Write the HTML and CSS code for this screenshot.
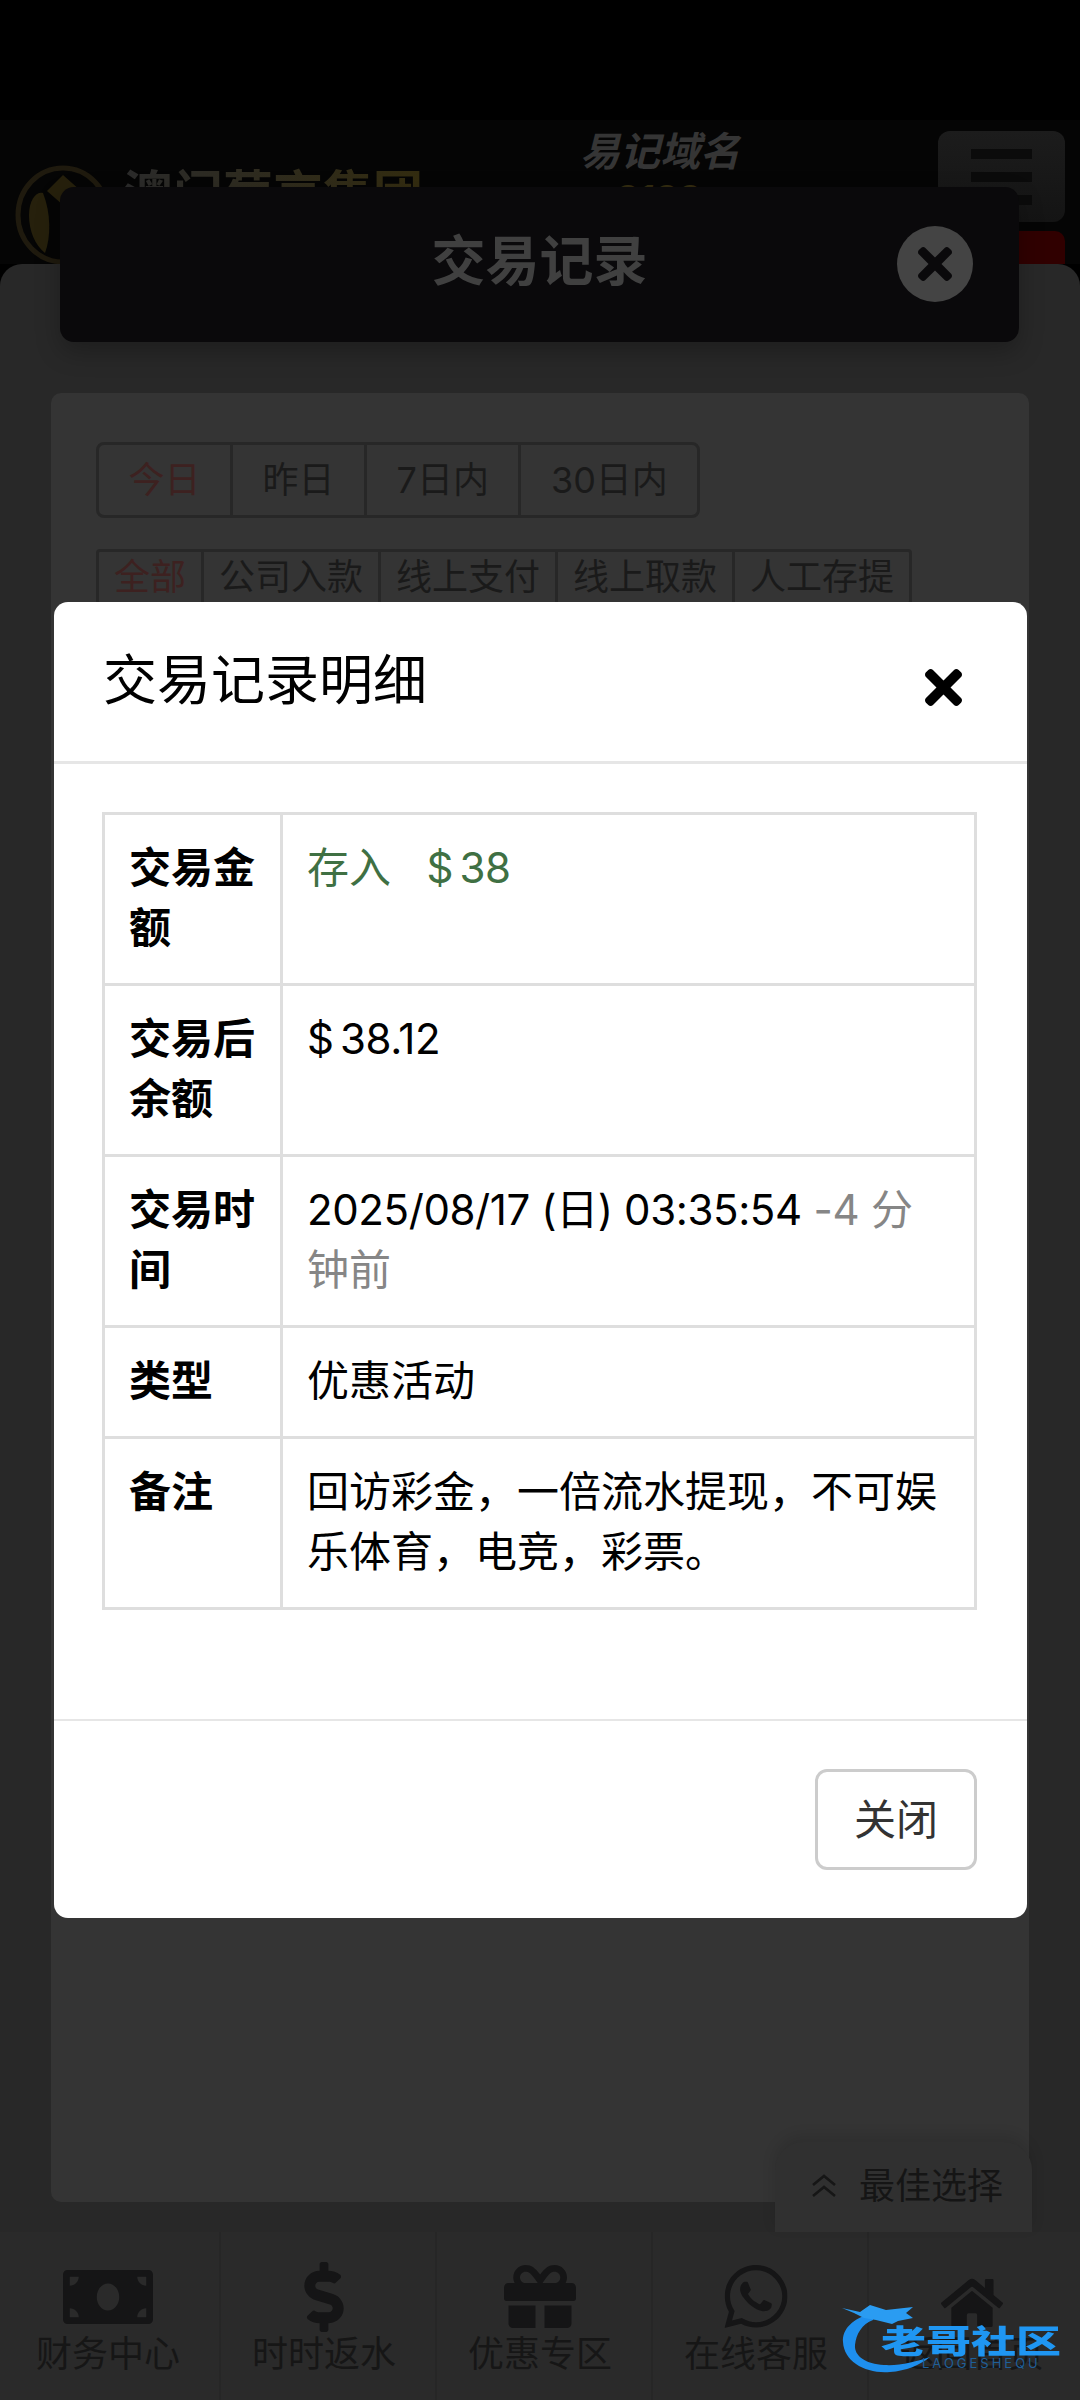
FILE: index.html
```html
<!DOCTYPE html>
<html lang="zh-CN">
<head>
<meta charset="utf-8">
<title>交易记录</title>
<link rel="stylesheet" href="styles.css">
</head>
<body>
<div class="page">
  <div class="status-bar"></div>

  <header class="site-header">
    <div class="brand">
      <svg class="brand-mark" viewBox="0 0 96 100" aria-hidden="true">
        <ellipse cx="48" cy="50" rx="45" ry="47" fill="none" stroke="#1f1a0e" stroke-width="5"/>
        <path d="M48 10 L66 26 L48 40 L32 26 Z" fill="#26200c"/>
        <path d="M14 50 C14 34 22 26 28 28 C36 48 36 72 30 88 C20 80 14 66 14 50 Z" fill="#26200c"/>
      </svg>
      <span class="brand-name">澳门葡京集团</span>
    </div>
    <div class="domain">
      <span class="domain-label">易记域名</span>
      <span class="domain-value">a.8188</span>
    </div>
    <div class="header-side">
      <button class="menu-button" type="button" aria-label="菜单"><i></i><i></i><i></i></button>
      <span class="notice-tag"></span>
    </div>
  </header>

  <main class="panel">
    <section class="records">
      <div class="range-tabs">
        <span class="tab is-active">今日</span>
        <span class="tab">昨日</span>
        <span class="tab">7日内</span>
        <span class="tab">30日内</span>
      </div>
      <div class="type-tabs">
        <span class="tab is-active">全部</span>
        <span class="tab">公司入款</span>
        <span class="tab">线上支付</span>
        <span class="tab">线上取款</span>
        <span class="tab">人工存提</span>
      </div>
    </section>
  </main>

  <nav class="bottom-nav">
    <a class="nav-item">
      <svg class="nav-icon" width="90" height="54" viewBox="0 64 640 384"><path d="M608 64H32C14.33 64 0 78.33 0 96v320c0 17.67 14.33 32 32 32h576c17.67 0 32-14.33 32-32V96c0-17.67-14.33-32-32-32zM48 400v-64c35.35 0 64 28.65 64 64H48zm0-224v-64h64c0 35.35-28.65 64-64 64zm272 176c-44.19 0-80-42.99-80-96 0-53.02 35.82-96 80-96s80 42.98 80 96c0 53.03-35.83 96-80 96zm272 48h-64c0-35.35 28.65-64 64-64v64zm0-224c-35.35 0-64-28.65-64-64h64v64z"/></svg>
      <span>财务中心</span>
    </a>
    <a class="nav-item">
      <svg class="nav-icon" width="40" height="70" viewBox="0 0 288 512"><path d="M209.2 233.4l-108-31.6C88.7 198.2 80 186.5 80 173.5c0-16.3 13.2-29.5 29.5-29.5h66.3c12.2 0 24.2 3.7 34.2 10.5 6.1 4.1 14.3 3.1 19.5-2l34.8-34c7.1-6.9 6.1-18.4-1.8-24.5C238 74.8 207.4 64.1 176 64V16c0-8.8-7.2-16-16-16h-32c-8.8 0-16 7.2-16 16v48h-2.5C45.8 64-5.4 118.7.5 183.6c4.2 46.1 39.4 83.6 83.8 96.6l102.5 30c12.5 3.7 21.2 15.3 21.2 28.3 0 16.3-13.2 29.5-29.5 29.5h-66.3C100 368 88 364.3 78 357.5c-6.1-4.1-14.3-3.1-19.5 2l-34.8 34c-7.1 6.9-6.1 18.4 1.8 24.5 24.5 19.2 55.1 29.9 86.5 30v48c0 8.8 7.2 16 16 16h32c8.8 0 16-7.2 16-16v-48.2c46.6-.9 90.3-28.6 105.7-72.7 21.5-61.6-14.6-124.8-72.5-141.7z"/></svg>
      <span>时时返水</span>
    </a>
    <a class="nav-item">
      <svg class="nav-icon" width="72" height="63" viewBox="0 32 512 448"><path d="M32 448c0 17.7 14.3 32 32 32h160V320H32v128zm256 32h160c17.7 0 32-14.3 32-32V320H288v160zm192-320h-42.1c6.2-12.1 10.1-25.5 10.1-40 0-48.5-39.5-88-88-88-41.6 0-68.5 21.3-103 68.3-34.5-47-61.4-68.3-103-68.3-48.5 0-88 39.5-88 88 0 14.5 3.8 27.9 10.1 40H32c-17.7 0-32 14.3-32 32v80c0 8.8 7.2 16 16 16h480c8.8 0 16-7.2 16-16v-80c0-17.7-14.3-32-32-32zm-326.1 0c-22.1 0-40-17.9-40-40s17.9-40 40-40c19.9 0 34.6 3.3 86.1 80h-86.1zm206.1 0h-86.1c51.4-76.5 65.7-80 86.1-80 22.1 0 40 17.9 40 40s-17.9 40-40 40z"/></svg>
      <span>优惠专区</span>
    </a>
    <a class="nav-item">
      <svg class="nav-icon" width="63" height="63" viewBox="0 32 448 448"><path d="M380.9 97.1C339 55.1 283.2 32 223.9 32c-122.4 0-222 99.6-222 222 0 39.1 10.2 77.3 29.6 111L0 480l117.7-30.9c32.4 17.7 68.9 27 106.1 27h.1c122.3 0 224.1-99.6 224.1-222 0-59.3-25.2-115-67.1-157zm-157 341.6c-33.2 0-65.7-8.9-94-25.7l-6.7-4-69.8 18.3L72 359.2l-4.4-7c-18.5-29.4-28.2-63.3-28.2-98.2 0-101.7 82.8-184.5 184.6-184.5 49.3 0 95.6 19.2 130.4 54.1 34.8 34.9 56.2 81.2 56.1 130.5 0 101.8-84.9 184.6-186.6 184.6zm101.2-138.2c-5.5-2.8-32.8-16.2-37.9-18-5.1-1.9-8.8-2.8-12.5 2.8-3.7 5.6-14.3 18-17.6 21.8-3.2 3.7-6.5 4.2-12 1.4-32.6-16.3-54-29.1-75.5-66-5.7-9.8 5.7-9.1 16.3-30.3 1.8-3.7.9-6.9-.5-9.7-1.4-2.8-12.5-30.1-17.1-41.2-4.5-10.8-9.1-9.3-12.5-9.5-3.2-.2-6.9-.2-10.6-.2-3.7 0-9.7 1.4-14.8 6.9-5.1 5.6-19.4 19-19.4 46.3 0 27.3 19.9 53.7 22.6 57.4 2.8 3.7 39.1 59.7 94.8 83.8 35.2 15.2 49 16.5 66.6 13.9 10.7-1.6 32.8-13.4 37.4-26.4 4.6-13 4.6-24.1 3.2-26.4-1.3-2.5-5-3.9-10.5-6.6z"/></svg>
      <span>在线客服</span>
    </a>
    <a class="nav-item">
      <svg class="nav-icon" width="62" height="52" viewBox="0 32 576 448"><path d="M280.37 148.26L96 300.11V464a16 16 0 0 0 16 16l112.06-.29a16 16 0 0 0 15.92-16V368a16 16 0 0 1 16-16h64a16 16 0 0 1 16 16v95.64a16 16 0 0 0 16 16.05L464 480a16 16 0 0 0 16-16V300L295.67 148.26a12.19 12.19 0 0 0-15.3 0zM571.6 251.47L488 182.56V44.05a12 12 0 0 0-12-12h-56a12 12 0 0 0-12 12v72.61L318.47 43a48 48 0 0 0-61 0L4.34 251.47a12 12 0 0 0-1.6 16.9l25.5 31A12 12 0 0 0 45.15 301l235.22-193.74a12.19 12.19 0 0 1 15.3 0L530.9 301a12 12 0 0 0 16.9-1.6l25.5-31a12 12 0 0 0-1.7-16.93z"/></svg>
      <span>返回首页</span>
    </a>
  </nav>

  <div class="title-bar">
    <h1>交易记录</h1>
    <button class="title-close" type="button" aria-label="关闭">
      <svg width="34" height="34" viewBox="0 80 352 352"><path d="M242.72 256l100.07-100.07c12.28-12.28 12.28-32.19 0-44.48l-22.24-22.24c-12.28-12.28-32.19-12.28-44.48 0L176 189.28 75.93 89.21c-12.28-12.28-32.19-12.28-44.48 0L9.21 111.45c-12.28 12.28-12.28 32.19 0 44.48L109.28 256 9.21 356.07c-12.28 12.28-12.28 32.19 0 44.48l22.24 22.24c12.28 12.28 32.2 12.28 44.48 0L176 322.72l100.07 100.07c12.28 12.28 32.2 12.28 44.48 0l22.24-22.24c12.28-12.28 12.28-32.19 0-44.48L242.72 256z"/></svg>
    </button>
  </div>

  <div class="best-choice">
    <svg width="26" height="24" viewBox="0 0 26 24" fill="none" stroke="#161616" stroke-width="2.6"><path d="M2 11 13 2l11 9M2 22l11-9 11 9"/></svg>
    <span>最佳选择</span>
  </div>

  <div class="modal" role="dialog">
    <div class="modal-header">
      <h2>交易记录明细</h2>
      <button class="modal-x" type="button" aria-label="关闭">
        <svg width="37" height="37" viewBox="0 80 352 352"><path d="M242.72 256l100.07-100.07c12.28-12.28 12.28-32.19 0-44.48l-22.24-22.24c-12.28-12.28-32.19-12.28-44.48 0L176 189.28 75.93 89.21c-12.28-12.28-32.19-12.28-44.48 0L9.21 111.45c-12.28 12.28-12.28 32.19 0 44.48L109.28 256 9.21 356.07c-12.28 12.28-12.28 32.19 0 44.48l22.24 22.24c12.28 12.28 32.2 12.28 44.48 0L176 322.72l100.07 100.07c12.28 12.28 32.2 12.28 44.48 0l22.24-22.24c12.28-12.28 12.28-32.19 0-44.48L242.72 256z"/></svg>
      </button>
    </div>
    <div class="modal-body">
      <table class="detail-table">
        <colgroup><col class="label-col"><col></colgroup>
        <tbody>
          <tr><th>交易金额</th><td class="amount-in">存入 &nbsp; <span class="num money">$ 38</span></td></tr>
          <tr><th>交易后余额</th><td><span class="num money">$ 38.12</span></td></tr>
          <tr><th>交易时间</th><td><span class="num">2025/08/17 (日) 03:35:54</span> <span class="muted"><span class="num">-4</span> 分<span class="keep">钟前</span></span></td></tr>
          <tr><th>类型</th><td>优惠活动</td></tr>
          <tr><th>备注</th><td>回访彩金，一倍流水提现，不可娱乐体育，电竞，彩票。</td></tr>
        </tbody>
      </table>
    </div>
    <div class="modal-footer">
      <button class="close-button" type="button">关闭</button>
    </div>
  </div>

  <div class="site-stamp">
    <svg class="stamp-dragon" width="100" height="72" viewBox="0 0 100 72">
      <path d="M33 9 C12 14 2 26 3 38 C4 58 26 70 50 68 C66 67 80 61 90 53 C74 58 60 62 44 61 C26 60 14 52 15 41 C16 30 22 20 33 16 Z" fill="#1e8fee"/>
      <path d="M2 4 L20 8 L30 1 L46 6 L73 3 L66 9 L73 14 L58 17 L52 20 L36 16 L24 14 L14 9 Z" fill="#2a9cf2"/>
    </svg>
    <div class="stamp-text">
      <strong>老哥社区</strong>
      <small>LAOGESHEQU</small>
    </div>
  </div>
</div>
</body>
</html>
```
FILE: styles.css
```css
* { box-sizing: border-box; }

html, body { margin: 0; padding: 0; background: #000; }

body {
  font-family: Inter, "Noto Sans CJK SC", sans-serif;
  font-size: 42px;
  line-height: 60px;
  color: #000;
}

button { font: inherit; padding: 0; border: 0; background: none; }
h1, h2 { margin: 0; }

.page {
  position: relative;
  width: 1080px;
  height: 2400px;
  overflow: hidden;
  display: flex;
  flex-direction: column;
  background: #000;
}

.status-bar { height: 120px; flex: none; background: #000; }

/* Site header */
.site-header {
  height: 144px;
  flex: none;
  display: flex;
  padding: 0 15px;
  background: #050505;
}

.brand { display: flex; align-items: flex-start; width: 565px; flex: none; }
.brand-mark { width: 96px; height: 100px; margin-top: 45px; flex: none; }

.brand-name {
  margin: 44px 0 0 12px;
  font-size: 50px;
  line-height: 60px;
  font-weight: 700;
  white-space: nowrap;
  background: linear-gradient(90deg, #2b2b2b, #332c10);
  -webkit-background-clip: text;
  background-clip: text;
  color: transparent;
}

.domain { display: flex; flex-direction: column; padding-top: 8px; }

.domain-label {
  font-size: 40px;
  line-height: 48px;
  font-weight: 700;
  font-style: italic;
  color: #353535;
}

.domain-value { font-size: 36px; line-height: 44px; font-weight: 700; font-style: italic; color: #332c10; }

.header-side {
  margin-left: auto;
  width: 127px;
  flex: none;
  display: flex;
  flex-direction: column;
}

.menu-button {
  height: 91px;
  margin-top: 11px;
  display: flex;
  flex-direction: column;
  justify-content: center;
  align-items: center;
  gap: 13px;
  border-radius: 12px;
  background: linear-gradient(#1c1c1c, #141414);
}

.menu-button i { display: block; width: 61px; height: 10px; background: #0b0b0b; }

.notice-tag { height: 33px; margin-top: 9px; border-radius: 10px 10px 0 0; background: #300000; }

/* Records panel */
.panel {
  flex: 1;
  min-height: 0;
  padding: 129px 51px 30px;
  border-radius: 22px 22px 0 0;
  background: #282828;
}

.records {
  height: 100%;
  padding: 49px 45px;
  border-radius: 10px;
  background: #343434;
}

.range-tabs, .type-tabs { display: flex; width: max-content; border: 3px solid #272727; }

.range-tabs { height: 76px; border-radius: 8px; }
.type-tabs { height: 56px; margin-top: 31px; border-radius: 4px; }

.tab {
  display: flex;
  align-items: center;
  font-size: 36px;
  line-height: 1;
  color: #1a1a1a;
}

.tab + .tab { border-left: 3px solid #272727; }
.tab.is-active { color: #3d2120; }
.range-tabs .tab { padding: 0 29.5px; }
.type-tabs .tab { padding: 0 15px; }

/* Title bar over the header */
.title-bar {
  position: absolute;
  left: 60px;
  top: 187px;
  width: 959px;
  height: 155px;
  display: flex;
  align-items: center;
  justify-content: center;
  padding-bottom: 4px;
  border-radius: 14px;
  background: #0a090b;
  box-shadow: 0 10px 24px rgba(0, 0, 0, .25);
}

.title-bar h1 { font-size: 54px; line-height: 1.2; font-weight: 700; color: #404040; }

.title-close {
  position: absolute;
  left: 837px;
  top: 39px;
  width: 76px;
  height: 76px;
  display: flex;
  align-items: center;
  justify-content: center;
  border-radius: 50%;
  background: #444;
  fill: #0a090b;
}

/* Bottom navigation */
.bottom-nav {
  height: 168px;
  flex: none;
  display: grid;
  grid-template-columns: repeat(5, 1fr);
  background: #2a2a2a;
}

.nav-item {
  position: relative;
  display: flex;
  flex-direction: column;
  align-items: center;
  color: #161616;
}

.nav-item + .nav-item::before {
  content: "";
  position: absolute;
  left: 3px;
  top: 0;
  bottom: 0;
  width: 2px;
  background: #262626;
}

.nav-icon { position: absolute; fill: #151516; left: 50%; transform: translateX(-50%); }
.nav-item:nth-child(1) .nav-icon { top: 38px; }
.nav-item:nth-child(2) .nav-icon { top: 30px; }
.nav-item:nth-child(3) .nav-icon { top: 33px; }
.nav-item:nth-child(4) .nav-icon { top: 33px; }
.nav-item:nth-child(5) .nav-icon { top: 45px; }

.nav-item span {
  margin-top: 97px;
  font-size: 36px;
  line-height: 50px;
  white-space: nowrap;
}

.best-choice {
  position: absolute;
  left: 775px;
  top: 2142px;
  width: 257px;
  height: 90px;
  display: flex;
  align-items: center;
  gap: 22px;
  padding: 0 0 3px 36px;
  border-radius: 28px 28px 0 0;
  background: #303030;
  box-shadow: 0 -6px 14px rgba(0, 0, 0, .12);
  font-size: 36px;
  color: #151515;
}

/* Detail dialog */
.modal {
  position: absolute;
  left: 54px;
  top: 602px;
  width: 973px;
  height: 1316px;
  display: flex;
  flex-direction: column;
  border-radius: 14px;
  background: #fff;
}

.modal-header {
  height: 162px;
  flex: none;
  display: flex;
  align-items: flex-start;
  justify-content: space-between;
  padding: 40px 65px 0 49px;
  border-bottom: 3px solid #e6e6e6;
}

.modal-header h2 { font-size: 54px; line-height: 78px; font-weight: 400; }
.modal-x { margin-top: 27px; fill: #000; display: flex; }

.modal-body { flex: 1; padding: 48px 48px 0; }

.detail-table { width: 875px; border-collapse: collapse; table-layout: fixed; }
.label-col { width: 178px; }

.detail-table th,
.detail-table td {
  padding: 23px 24px 25px;
  border: 3px solid #dedede;
  text-align: left;
  vertical-align: top;
  font-size: 42px;
  line-height: 60px;
}

.detail-table th { font-weight: 700; }
.amount-in { color: #3f7043; }
.muted { color: #868686; }
.num { letter-spacing: -.4px; }
.money { word-spacing: -5px; }
.keep { white-space: nowrap; }

.modal-footer {
  height: 199px;
  flex: none;
  display: flex;
  justify-content: flex-end;
  padding: 48px 50px 48px 48px;
  border-top: 2px solid #e6e6e6;
}

.close-button {
  width: 162px;
  height: 101px;
  border: 3px solid #ccc;
  border-radius: 12px;
  font-size: 42px;
  color: #333;
}

/* Corner stamp */
.site-stamp {
  position: absolute;
  left: 840px;
  top: 2304px;
  width: 232px;
  height: 72px;
  pointer-events: none;
}

.stamp-dragon { position: absolute; left: 0; top: 0; }

.stamp-text {
  position: absolute;
  left: 41px;
  top: 21px;
  display: flex;
  flex-direction: column;
  align-items: flex-start;
}

.stamp-text strong {
  font-size: 45px;
  line-height: 32px;
  font-weight: 900;
  white-space: nowrap;
  color: #1f96f2;
  transform: scaleY(.72);
}

.stamp-text small {
  margin-left: 41px;
  font-size: 13px;
  line-height: 12px;
  letter-spacing: 3px;
  color: #1f5f99;
}
```
